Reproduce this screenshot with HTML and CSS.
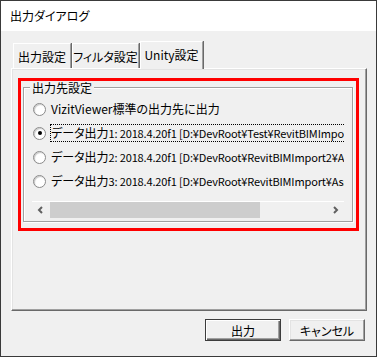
FILE: index.html
```html
<!DOCTYPE html>
<html lang="ja">
<head>
<meta charset="utf-8">
<link rel="stylesheet" href="styles.css">
</head>
<body>
<div class="window">
  <div class="titlebar">出力ダイアログ</div>
  <div class="body">
    <div class="tabs">
      <div class="tab tab-1">出力設定</div>
      <div class="tab tab-2">フィルタ設定</div>
      <div class="tab tab-active">Unity設定</div>
    </div>
    <div class="panel">
      <div class="highlight">
        <fieldset class="group">
          <legend>出力先設定</legend>
          <div class="list">
            <div class="rows">
              <div class="row"><span class="radio"></span><span class="label">VizitViewer標準の出力先に出力</span></div>
              <div class="row"><span class="radio checked"></span><span class="label focus">データ出力<span class="path">1: 2018.4.20f1 [D:¥DevRoot¥Test¥RevitBIMImport¥Assets]</span></span></div>
              <div class="row"><span class="radio"></span><span class="label">データ出力<span class="path">2: 2018.4.20f1 [D:¥DevRoot¥RevitBIMImport2¥Assets]</span></span></div>
              <div class="row"><span class="radio"></span><span class="label">データ出力<span class="path">3: 2018.4.20f1 [D:¥DevRoot¥RevitBIMImport¥Assets]</span></span></div>
            </div>
            <div class="hscroll">
              <div class="arrow">
                <svg width="17" height="16" viewBox="0 0 17 16"><path d="M10 5 L7 8 L10 11" fill="none" stroke="#606060" stroke-width="2"/></svg>
              </div>
              <div class="track"><div class="thumb"></div></div>
              <div class="arrow">
                <svg width="17" height="16" viewBox="0 0 17 16"><path d="M7 5 L10 8 L7 11" fill="none" stroke="#606060" stroke-width="2"/></svg>
              </div>
            </div>
          </div>
        </fieldset>
      </div>
    </div>
    <div class="buttons">
      <div class="btn btn-default">出力</div>
      <div class="btn">キャンセル</div>
    </div>
  </div>
</div>
</body>
</html>
```

FILE: styles.css
```css
* { box-sizing: border-box; }
html, body {
  margin: 0;
  padding: 0;
  background: #2e2e2e;
}
body {
  font-family: "Noto Sans CJK JP", "Noto Sans", sans-serif;
  font-size: 12px;
  color: #000;
  font-feature-settings: "palt";
}
.window {
  width: 377px;
  height: 357px;
  border: 1px solid #3a3a3a;
  background: #f0f0f0;
  display: flex;
  flex-direction: column;
}
.titlebar {
  height: 30px;
  background: #fff;
  padding-left: 9px;
  line-height: 30px;
  font-size: 12px;
}
.body {
  flex: 1;
  background: #f0f0f0;
  display: flex;
  flex-direction: column;
}
.tabs {
  display: flex;
  align-items: flex-end;
  height: 28px;
  margin: 10px 0 -1px 12px;
  position: relative;
  z-index: 2;
}
.tab {
  height: 25px;
  margin-bottom: 1px;
  border-top: 1px solid #fff;
  border-left: 1px solid #fff;
  border-right: 1px solid #a0a0a0;
  box-shadow: 1px 0 0 #696969;
  display: flex;
  align-items: center;
  justify-content: center;
  padding-top: 1px;
  background: #f0f0f0;
}
.tab-1 { width: 58px; }
.tab-2 { width: 67px; margin-left: 1px; }
.tab-active {
  width: 63px;
  height: 28px;
  margin: 0 0 0 1px;
  padding-top: 0;
  padding-bottom: 2px;
}
.panel {
  margin-left: 10px;
  width: 356px;
  height: 243px;
  border-top: 1px solid #fff;
  border-left: 1px solid #fff;
  border-right: 1px solid #696969;
  border-bottom: 1px solid #696969;
  box-shadow: inset -1px -1px 0 #a0a0a0, inset 1px 1px 0 #e3e3e3;
  padding: 9px 0 0 6px;
  position: relative;
  z-index: 1;
}
.highlight {
  width: 341px;
  height: 153px;
  border: 3px solid #ff0000;
  padding: 0 3px 4px 2px;
}
.group {
  margin: 0;
  padding: 0 7px 3px 8px;
  border: 1px solid #a0a0a0;
  box-shadow: inset 1px 1px 0 #fff, 1px 1px 0 #fff;
  min-width: 0;
}
.group legend {
  margin-left: -2px;
  padding: 0 2px;
  line-height: 13px;
  font-size: 12px;
  background: #f0f0f0;
}
.list {
  margin-top: 3px;
  width: 312px;
  overflow: hidden;
}
.rows {
  padding-bottom: 8px;
}
.row {
  height: 24px;
  display: flex;
  align-items: center;
  white-space: nowrap;
}
.radio {
  flex: none;
  width: 13px;
  height: 13px;
  margin-left: 1px;
  margin-right: 4px;
  border-radius: 50%;
  background: #fff;
  border: 1px solid #8a8a8a;
  box-shadow: inset 1px 1px 1px #c8c8c8;
  display: flex;
  align-items: center;
  justify-content: center;
}
.radio.checked::after {
  content: "";
  width: 4px;
  height: 4px;
  border-radius: 50%;
  background: #000;
}
.label {
  border: 1px dotted transparent;
  line-height: 16px;
  padding-right: 2px;
}
.label .path {
  font-size: 11px;
  letter-spacing: -0.15px;
}
.label.focus {
  border-color: #000;
}
.hscroll {
  display: flex;
  height: 17px;
  border-top: 1px solid #fff;
}
.arrow {
  flex: none;
  width: 17px;
  height: 16px;
  display: flex;
}
.track {
  flex: 1;
  display: flex;
}
.thumb {
  width: 210px;
  height: 16px;
  background: #cdcdcd;
  margin-left: 1px;
}
.buttons {
  display: flex;
  justify-content: flex-end;
  gap: 8px;
  margin-top: 8px;
  padding-right: 11px;
}
.btn {
  width: 76px;
  height: 22px;
  display: flex;
  align-items: center;
  justify-content: center;
  background: #f0f0f0;
  border-top: 1px solid #fff;
  border-left: 1px solid #fff;
  border-right: 1px solid #696969;
  border-bottom: 1px solid #696969;
  box-shadow: inset -1px -1px 0 #a0a0a0, inset 1px 1px 0 #e3e3e3;
  font-size: 12px;
}
.btn-default {
  border: 1px solid #3c3c3c;
  box-shadow: inset 1px 1px 0 #fff, inset -1px -1px 0 #696969, inset -2px -2px 0 #a0a0a0;
}
```
